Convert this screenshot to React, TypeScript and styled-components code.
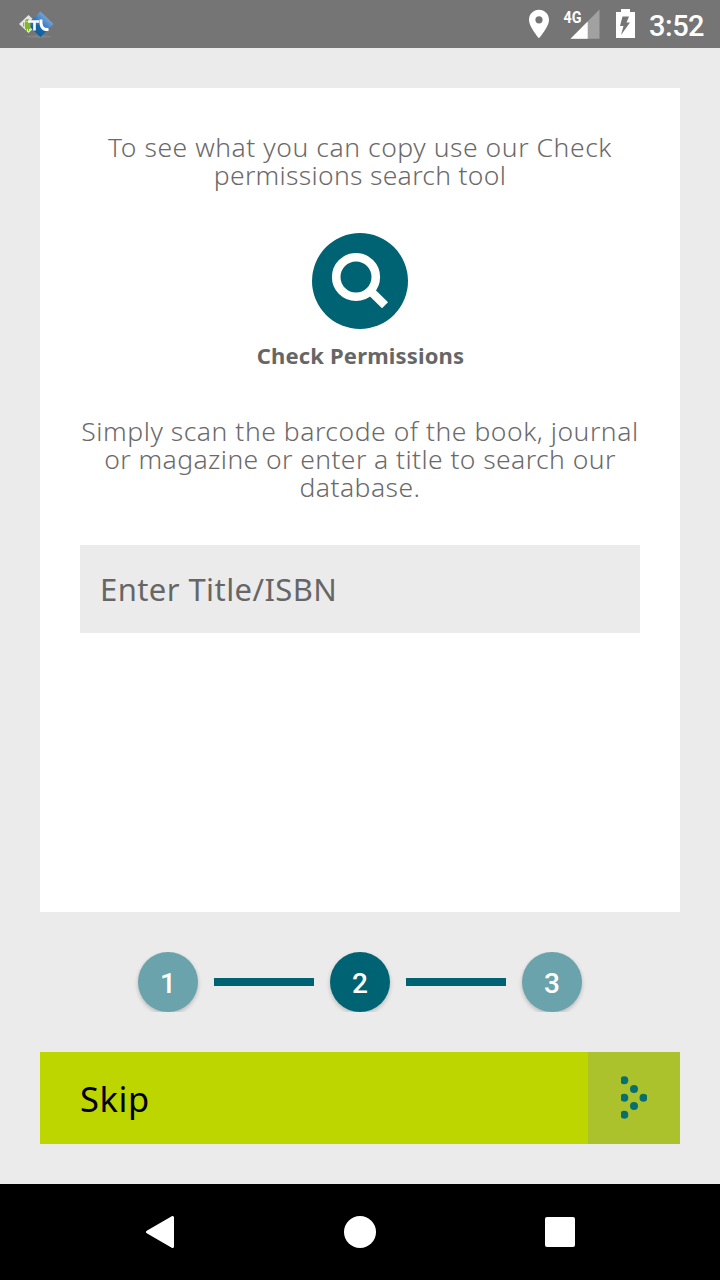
import React from 'react';
import styled, { createGlobalStyle } from 'styled-components';

const GlobalStyle = createGlobalStyle`
  * { box-sizing: border-box; }
  body { margin: 0; background: #ebebeb; }
`;

const Screen = styled.div`
  width: 720px;
  height: 1280px;
  display: flex;
  flex-direction: column;
  background: #ebebeb;
  overflow: hidden;
  font-family: 'Noto Sans', 'Open Sans', sans-serif;
`;

const StatusBar = styled.header`
  height: 48px;
  flex: none;
  display: flex;
  align-items: center;
  padding: 0 16px 0 18px;
  background: #757575;
  color: #fff;
  svg { display: block; }
`;

const StatusIcons = styled.div`
  display: flex;
  align-items: center;
  margin-left: auto;
`;

const Clock = styled.time`
  width: 55px;
  margin-left: 13px;
  font: 500 29px/48px Roboto, sans-serif;
  letter-spacing: -0.5px;
  padding-top: 3px;
  white-space: nowrap;
`;

const Content = styled.main`
  flex: 1;
  display: flex;
  flex-direction: column;
  padding: 40px;
`;

const Card = styled.section`
  height: 824px;
  padding: 45px 40px 0;
  display: flex;
  flex-direction: column;
  align-items: center;
  background: #fff;
`;

const Paragraph = styled.p`
  margin: 0;
  display: flex;
  flex-direction: column;
  align-items: center;
  font-size: 26.5px;
  font-weight: 300;
  line-height: 28px;
  color: #6a6a6a;
`;

const Line = styled.span<{ $tracking: number }>`
  white-space: nowrap;
  letter-spacing: ${(p) => p.$tracking}px;
`;

const SearchBadge = styled.div`
  width: 96px;
  height: 96px;
  margin-top: 44px;
  border-radius: 50%;
  background: #006373;
`;

const BadgeLabel = styled.h2`
  margin: 10px 0 46px;
  padding-left: 1px;
  font-size: 22px;
  font-weight: 700;
  line-height: 32px;
  letter-spacing: 0.17px;
  color: #666;
  white-space: nowrap;
`;

const SearchField = styled.input`
  width: 560px;
  height: 88px;
  margin-top: 44px;
  padding: 0 20px;
  border: 0;
  border-radius: 0;
  outline: none;
  background: #ebebeb;
  font: 400 31px/40px 'Noto Sans', 'Open Sans', sans-serif;
  letter-spacing: 0.42px;
  &::placeholder { color: #666; opacity: 1; }
`;

const Steps = styled.nav`
  height: 60px;
  margin-top: 40px;
  display: flex;
  align-items: center;
  justify-content: center;
  gap: 16px;
  overflow: hidden;
`;

const Step = styled.div<{ $active?: boolean }>`
  width: 60px;
  height: 60px;
  padding-top: 4px;
  border-radius: 50%;
  display: flex;
  align-items: center;
  justify-content: center;
  background: ${(p) => (p.$active ? '#006373' : '#6ba3ac')};
  color: #fff;
  font: 500 28px/32px Roboto, sans-serif;
  box-shadow: 0 2px 4px rgba(0, 0, 0, 0.22);
`;

const StepLine = styled.div`
  width: 100px;
  height: 8px;
  background: #006373;
`;

const SkipButton = styled.button`
  height: 92px;
  margin-top: 40px;
  padding: 0;
  border: 0;
  display: flex;
  background: #bed600;
  color: #000;
`;

const SkipLabel = styled.span`
  flex: 1;
  padding: 1px 0 0 40px;
  text-align: left;
  font: 400 34.5px/92px 'Noto Sans', sans-serif;
  letter-spacing: 0.6px;
`;

const SkipArrow = styled.span`
  width: 92px;
  height: 92px;
  background: #abc22d;
`;

const SystemNav = styled.footer`
  height: 96px;
  flex: none;
  display: flex;
  align-items: center;
  justify-content: center;
  gap: 152px;
  background: #000;
`;

const AppLogo = () => (
  <svg width="38" height="28" viewBox="18 10 38 28">
    <defs>
      <linearGradient id="blue" x1="0" y1="1" x2="1" y2="0">
        <stop offset="0" stopColor="#07518d" />
        <stop offset="0.5" stopColor="#3477bd" />
        <stop offset="1" stopColor="#b0c9ec" />
      </linearGradient>
    </defs>
    <ellipse cx="39" cy="36.500" rx="13" ry="1.200" fill="#929292" opacity="0.5" />
    <path d="M19 24 28.500 15 38 24 28.500 33Z" fill="#e4e5e4" />
    <path d="M27 24 40.500 11.500 53.500 24 40.500 37Z" fill="url(#blue)" />
    <path d="M30 27 40.500 24 46 31.500 40.500 37Z" fill="#075c94" opacity="0.55" />
    <path d="M25 21.500q0-2.500 2.500-2.500t2.500 2.500zM25 22h5.500v7H29v2h-1v-2h-1v2h-1v-2h-1zM23 22.500h1.300v4H23z" fill="#83b82d" />
    <path d="M28 21.500h11M34.500 21.500v9" fill="none" stroke="#fff" strokeWidth="2.600" />
    <path d="M41 19.500c-.5 7 1.500 10.500 7.500 10" fill="none" stroke="#fff" strokeWidth="3" />
  </svg>
);

const LocationIcon = () => (
  <svg width="21" height="48" viewBox="528 0 21 48">
    <path fillRule="evenodd" fill="#fff" d="M539 9.700c-5.600 0-10 4.400-10 10 0 7.400 10 18.500 10 18.500s10-11.100 10-18.500c0-5.600-4.400-10-10-10zm0 6.500a3.600 3.600 0 1 1 0 7.200 3.600 3.600 0 0 1 0-7.200z" />
  </svg>
);

const SignalIcon = () => (
  <svg width="51" height="48" viewBox="549 0 51 48">
    <path d="M599.500 9.500V38.700H570.500Z" fill="#fff" opacity="0.32" />
    <path d="M587.700 21.500V38.700H570.500Z" fill="#fff" />
    <text x="563.500" y="23" fill="#fff" fontFamily="Roboto, sans-serif" fontWeight="700" fontSize="17" textLength="18" lengthAdjust="spacingAndGlyphs">4G</text>
  </svg>
);

const BatteryIcon = () => (
  <svg width="36" height="48" viewBox="600 0 36 48">
    <path fillRule="evenodd" fill="#fff" d="M621 9h9v3h5v26h-19V12h5zM622.500 16.500h6.500l-2.500 6h3.500l-9 12.500 2.500-9h-3.500z" />
  </svg>
);

const MagnifierIcon = () => (
  <svg width="96" height="96" viewBox="0 0 96 96">
    <circle cx="44" cy="44" r="19.800" fill="none" stroke="#fffffc" strokeWidth="8.600" />
    <path d="M59 58.500 73 72.300" stroke="#fffffc" strokeWidth="8.600" />
  </svg>
);

const dots = [[36.300, 28.300], [46, 37], [36.300, 45.700], [55.500, 45.700], [46, 54], [36.300, 62.700]];

const DottedArrow = () => (
  <svg width="92" height="92" viewBox="0 0 92 92">
    <defs>
      <clipPath id="arrowEdge"><rect x="33" y="24" width="26" height="44" /></clipPath>
    </defs>
    <g fill="#086f70" clipPath="url(#arrowEdge)">
      {dots.map(([x, y]) => <circle key={`${x}-${y}`} cx={x} cy={y} r="4" />)}
    </g>
  </svg>
);

export default function App() {
  return (
    <Screen>
      <GlobalStyle />
      <StatusBar>
        <AppLogo />
        <StatusIcons>
          <LocationIcon />
          <SignalIcon />
          <BatteryIcon />
          <Clock>3:52</Clock>
        </StatusIcons>
      </StatusBar>
      <Content>
        <Card>
          <Paragraph>
            <Line $tracking={0.55}>To see what you can copy use our Check</Line>
            <Line $tracking={0.3}>permissions search tool</Line>
          </Paragraph>
          <SearchBadge><MagnifierIcon /></SearchBadge>
          <BadgeLabel>Check Permissions</BadgeLabel>
          <Paragraph>
            <Line $tracking={0.53}>Simply scan the barcode of the book, journal</Line>
            <Line $tracking={0.42}>or magazine or enter a title to search our</Line>
            <Line $tracking={0.45}>database.</Line>
          </Paragraph>
          <SearchField placeholder="Enter Title/ISBN" aria-label="Enter Title/ISBN" />
        </Card>
        <Steps>
          <Step>1</Step>
          <StepLine />
          <Step $active>2</Step>
          <StepLine />
          <Step>3</Step>
        </Steps>
        <SkipButton>
          <SkipLabel>Skip</SkipLabel>
          <SkipArrow><DottedArrow /></SkipArrow>
        </SkipButton>
      </Content>
      <SystemNav>
        <svg width="48" height="48" viewBox="0 0 48 48">
          <path d="M3.500 24 28.500 9.500V38.500Z" transform="translate(8 0)" fill="#fff" stroke="#fff" strokeWidth="3" strokeLinejoin="round" />
        </svg>
        <svg width="48" height="48" viewBox="0 0 48 48"><circle cx="24" cy="24" r="16" fill="#fff" /></svg>
        <svg width="48" height="48" viewBox="0 0 48 48"><rect x="9" y="9" width="30" height="30" rx="2" fill="#fff" /></svg>
      </SystemNav>
    </Screen>
  );
}
